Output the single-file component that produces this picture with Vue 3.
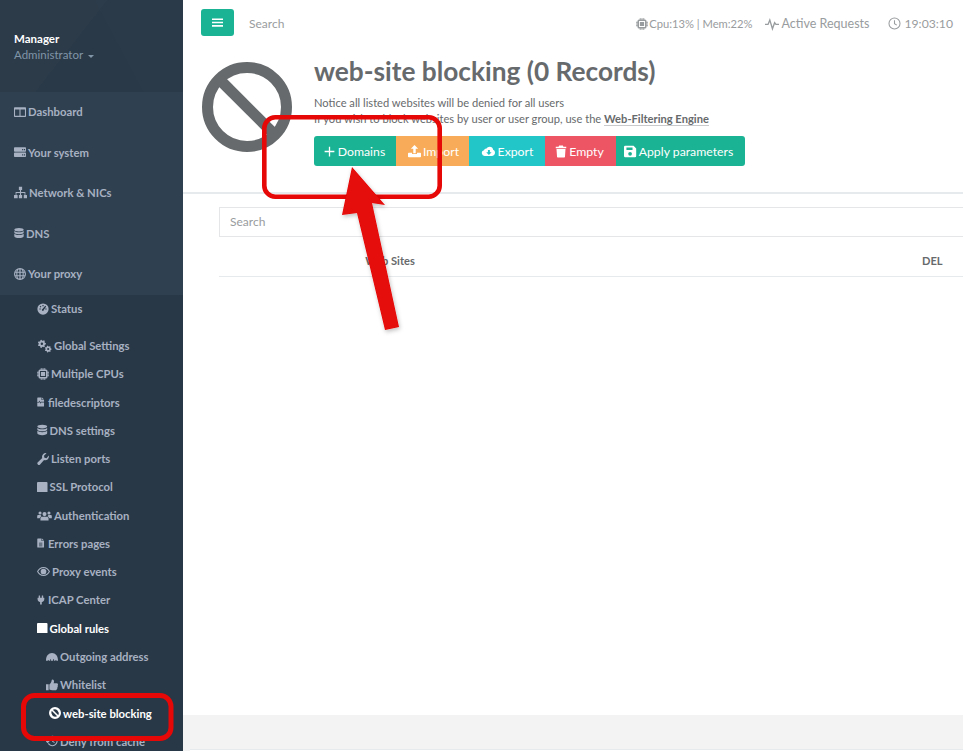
<script setup>
function gear(cx, cy, r, teeth, hole) {
  const out = r * 1.3
  const step = Math.PI / teeth
  let d = ''
  for (let i = 0; i < teeth * 2; i++) {
    const a1 = i * step - step * 0.28
    const a2 = i * step + step * 0.28
    const rad = i % 2 === 0 ? out : r
    d += (i === 0 ? 'M' : 'L') + (cx + rad * Math.cos(a1)).toFixed(2) + ' ' + (cy + rad * Math.sin(a1)).toFixed(2)
    d += 'L' + (cx + rad * Math.cos(a2)).toFixed(2) + ' ' + (cy + rad * Math.sin(a2)).toFixed(2)
  }
  d += 'Z'
  d += `M${cx - hole} ${cy}a${hole} ${hole} 0 1 0 ${hole * 2} 0a${hole} ${hole} 0 1 0 ${-hole * 2} 0Z`
  return d
}

const cpu = 'M5 0h1.2v2h1.2V0h1.2v2h1.2V0H11v2h1a2 2 0 0 1 2 2v1h2v1.2h-2v1.2h2v1.2h-2v1.2h2V11h-2v1a2 2 0 0 1-2 2h-1v2H9.8v-2H8.6v2H7.4v-2H6.2v2H5v-2H4a2 2 0 0 1-2-2v-1H0V9.8h2V8.6H0V7.4h2V6.2H0V5h2V4a2 2 0 0 1 2-2h1zM4 4v8h8V4zM5.2 5.2h5.600v5.600H5.200z'
const ban = 'M8 0a8 8 0 1 1 0 16A8 8 0 0 1 8 0zM3.600 5.100A5.500 5.500 0 0 0 10.900 12.400zM5.100 3.600l7.300 7.300A5.500 5.500 0 0 0 5.100 3.600z'

const icons = {
  columns: { f: 'M1 1.500h14a1 1 0 0 1 1 1v11a1 1 0 0 1-1 1H1a1 1 0 0 1-1-1v-11a1 1 0 0 1 1-1zM1.400 4.600v8.500h5.900V4.600zm7.300 0v8.500h5.900V4.600z' },
  server: { f: 'M1 1.500h14a1 1 0 0 1 1 1v4a1 1 0 0 1-1 1H1a1 1 0 0 1-1-1v-4a1 1 0 0 1 1-1zm9.800 2.500v1.500h1.500V4zm2.500 0v1.500h1.500V4zM1 8.800h14a1 1 0 0 1 1 1v3.700a1 1 0 0 1-1 1H1a1 1 0 0 1-1-1V9.800a1 1 0 0 1 1-1zm9.800 2.300v1.500h1.500v-1.500zm2.500 0v1.500h1.500v-1.500z' },
  sitemap: { f: 'M6 1h4v4H8.700v2.300H14V11h1.500a.5.5 0 0 1 .5.5V15h-4v-3.500a.5.5 0 0 1 .5-.5H13V8.500H8.700V11H10v4H6v-4h1.300V8.500H3V11h1a.5.5 0 0 1 .500.500V15H0v-3.500a.5.5 0 0 1 .500-.500H2V7.300h5.300V5H6z' },
  database: { f: 'M8 0c4.400 0 7.500 1.200 7.500 2.800S12.400 5.600 8 5.600.500 4.400.500 2.800 3.600 0 8 0zM.500 4.800C1.800 6.200 4.700 6.900 8 6.900s6.200-.700 7.500-2.100v2.400C15.500 8.800 12.400 10 8 10S.500 8.800.500 7.200zm0 4.400C1.800 10.600 4.700 11.300 8 11.300s6.200-.700 7.500-2.100v3.900C15.500 14.800 12.400 16 8 16S.500 14.800.500 13.100z' },
  globe: { f: 'M8 0a8 8 0 1 1 0 16A8 8 0 0 1 8 0zM5.800 2C5 3 4.700 4 4.600 5h2.600V2zM8.800 2v3h2.600c-.100-1-.400-2-1.200-3zM4.500 6.300v3.400h2.700V6.300zm4.300 0v3.400h2.700V6.300zM4.600 11c.100 1 .400 2 1.200 3h1.400v-3zm4.200 0v3h1.400c.800-1 1.100-2 1.200-3zM2 5h1.200c.100-.800.300-1.500.600-2.200C3 3.300 2.400 4.100 2 5zm10.800 0H14c-.400-.900-1-1.700-1.800-2.200.300.700.500 1.400.600 2.200zM1.700 6.300c-.100 1.100-.100 2.300 0 3.400h1.400V6.300zm11.200 0v3.400h1.400c.100-1.100.100-2.300 0-3.400zM2 11c.400.900 1 1.700 1.800 2.200-.300-.700-.500-1.400-.600-2.200zm10.800 0c-.100.800-.300 1.500-.600 2.200.800-.500 1.400-1.300 1.800-2.200z' },
  gauge: { f: 'M8 .500a7.500 7.500 0 1 1 0 15 7.500 7.500 0 0 1 0-15zM7.200 2.500v1.800h1.600V2.500zM3.200 7.200v1.600H5V7.200zm7.800 0v1.600h1.800V7.200zM11 3.600 7.300 8A1.300 1.300 0 1 0 9 9.300l3.200-4.700zM4.700 3.800 3.600 4.900l1.200 1.200 1.100-1.100z' },
  gears: { f: gear(5, 5.500, 3.600, 7, 1.400) + gear(12.200, 11.500, 3, 7, 1.200) },
  cpu: { f: cpu },
  filepulse: { f: 'M1.500 0H8v4.500h4.500V15a1 1 0 0 1-1 1h-10a1 1 0 0 1-1-1V1a1 1 0 0 1 1-1zM9 0l3.500 3.500H9zM.500 9.500h2.800l1-2 1.600 3.500 1.300-2.300h5.300v-1H6.500l-.600 1-1.600-3.500-1.700 3.300H.500z' },
  wrench: { f: 'M15.700 3.400c.500 1.700.100 3.500-1.200 4.800-1.400 1.400-3.400 1.700-5.100 1.100l-5.300 5.900a2.100 2.100 0 0 1-3-3L7 6.800C6.300 5 6.700 3 8.100 1.600 9.300.400 11-.100 12.600.300L9.300 3.600l.600 2.800 2.800.600z' },
  square: { f: 'M1.500 0h13A1.500 1.500 0 0 1 16 1.500v13a1.500 1.500 0 0 1-1.500 1.500h-13A1.500 1.500 0 0 1 0 14.500v-13A1.500 1.500 0 0 1 1.500 0z' },
  users: { f: 'M3.500 3a1.900 1.900 0 1 1 0 3.800 1.900 1.900 0 0 1 0-3.800zM14.500 3a1.900 1.900 0 1 1 0 3.800 1.900 1.900 0 0 1 0-3.800zM9 3.800a2.500 2.500 0 1 1 0 5 2.500 2.500 0 0 1 0-5zM0 8.800c0-.800.700-1.300 1.500-1.300h2.700c.300.600.700 1.100 1.200 1.500-1.200.400-2 1.300-2.400 2.500H0zM18 8.800c0-.800-.700-1.300-1.500-1.300h-2.700c-.300.600-.700 1.100-1.200 1.500 1.200.400 2 1.300 2.400 2.500H18zM6 9.500h6c1.200 0 2 1 2 2.200V14H4v-2.300c0-1.200.800-2.200 2-2.200z' },
  filetext: { f: 'M1.500 0H8v4.500h4.500V15a1 1 0 0 1-1 1h-10a1 1 0 0 1-1-1V1a1 1 0 0 1 1-1zM9 0l3.500 3.500H9zM3.500 7.500v1.200h6V7.500zm0 2.600v1.200h6v-1.200zm0 2.500v1.200h6v-1.200z' },
  eye: { f: 'M8 2.500c3.600 0 6.500 2.300 8 5.500-1.500 3.200-4.400 5.500-8 5.500S1.500 11.200 0 8c1.500-3.200 4.400-5.500 8-5.500zm0 1.300C5.400 3.800 3.100 5.500 1.500 8c1.600 2.500 3.900 4.200 6.500 4.200s4.900-1.700 6.500-4.200C12.900 5.500 10.600 3.800 8 3.800zm0 .700a3.500 3.500 0 1 1 0 7 3.500 3.500 0 0 1 0-7z' },
  plug: { f: 'M3.500 0h1.500a.5.5 0 0 1 .500.500V4h3V.500A.5.5 0 0 1 9 0h1.500a.5.5 0 0 1 .500.500V4h1.500a.5.5 0 0 1 .500.500V6c0 3-1.800 5-4.500 5.500V16h-3v-4.500C2.800 11 1 9 1 6V4.500A.5.5 0 0 1 1.500 4H3V.500a.5.5 0 0 1 .500-.500z' },
  dome: { f: 'M0 12C0 6.500 3.500 2.500 8 2.500s8 4 8 9.500v1h-2.300v-1h-1v1h-2v-2H9.500v2h-3v-2h-1v2h-2v-1h-1v1H0z' },
  thumb: { f: 'M0 7h3.500v8H0zM4.500 7.300c1.500-1.200 2.700-3 3-5.300 0-1 .500-1.500 1.200-1.500 1.500 0 2 1.500 2 2.800 0 1-.300 1.700-.700 2.500h4.300c1 0 1.700.800 1.700 1.700 0 .500-.200 1-.500 1.300.200.300.300.700.300 1 0 .600-.300 1.100-.700 1.400.100.300.100.500.100.800 0 .700-.400 1.200-.900 1.500 0 .900-.800 1.500-1.700 1.500H8.500c-1.500 0-2.700-.500-4-1z' },
  ban: { f: ban },
  history: { f: 'M8.500 1a7 7 0 1 1-6 10.600l1.200-.800A5.600 5.600 0 1 0 2.900 8H5l-2.800 3L-.500 8H1.500a7 7 0 0 1 7-7zM8 4.500h1.300v3.600l2.500 1.500-.700 1.100L8 8.800z' },
  plus: { f: 'M7.200 2h1.600v5.200H14v1.600H8.800V14H7.200V8.800H2V7.200h5.200z' },
  upload: { f: 'M8 0l4.500 4.700H9.500V10h-3V4.700H3.500zM1 9.500h4V11h6V9.500h4a1 1 0 0 1 1 1V14a1 1 0 0 1-1 1H1a1 1 0 0 1-1-1v-3.500a1 1 0 0 1 1-1z' },
  clouddown: { f: 'M9.500 2c2.200 0 4 1.600 4.200 3.800C15.100 6.200 16 7.500 16 9.500c0 2.200-1.800 4-4 4H3.500a3.500 3.500 0 0 1-1-6.900C2.800 5 4.300 4 5.700 4.300 6.500 2.900 7.900 2 9.500 2zM7.300 6v3H5.200l3.300 3.400L11.800 9H9.700V6z' },
  trash: { f: 'M5.500 0h5l.7 1.500H15V3.500H1V1.500h3.800zM2 4.500h12L13.300 15a1 1 0 0 1-1 1H3.700a1 1 0 0 1-1-1z' },
  save: { f: 'M1.500 1h10.300L15 4.200V13.500a1.500 1.500 0 0 1-1.500 1.500h-12A1.500 1.500 0 0 1 0 13.500v-11A1.500 1.500 0 0 1 1.500 1zM3 3v3h7.500V3zM7.500 8.500a2.300 2.300 0 1 0 0 4.600 2.300 2.300 0 0 0 0-4.600z' },
  bars: { f: 'M0 2h16v2.400H0zM0 6.800h16v2.400H0zM0 11.600h16V14H0z' },
  pulse: { s: 'M0 8.500h3.500l2-5 3 10 2.500-7 1.500 2h3.500' },
  clock: { s: 'M8 1.200a6.800 6.800 0 1 1 0 13.600A6.800 6.800 0 0 1 8 1.200zM8 4v4.200l2.800 1.800' }
}

const mainNav = [
  { label: 'Dashboard', icon: 'columns', w: 12, h: 12 },
  { label: 'Your system', icon: 'server', w: 12, h: 12 },
  { label: 'Network & NICs', icon: 'sitemap', w: 13, h: 13 },
  { label: 'DNS', icon: 'database', w: 10, h: 12 },
  { label: 'Your proxy', icon: 'globe', w: 12, h: 12 }
]

const subNav = [
  { label: 'Status', icon: 'gauge', w: 12, h: 12, first: true },
  { label: 'Global Settings', icon: 'gears', w: 15, h: 14 },
  { label: 'Multiple CPUs', icon: 'cpu', w: 12, h: 12 },
  { label: 'filedescriptors', icon: 'filepulse', w: 9, h: 12 },
  { label: 'DNS settings', icon: 'database', w: 10.500, h: 12 },
  { label: 'Listen ports', icon: 'wrench', w: 12, h: 12 },
  { label: 'SSL Protocol', icon: 'square', w: 10.500, h: 10.500 },
  { label: 'Authentication', icon: 'users', w: 15, h: 13, vb: 18 },
  { label: 'Errors pages', icon: 'filetext', w: 9, h: 12 },
  { label: 'Proxy events', icon: 'eye', w: 13, h: 13 },
  { label: 'ICAP Center', icon: 'plug', w: 9, h: 12 },
  { label: 'Global rules', icon: 'square', w: 10.500, h: 10.500, active: true },
  { label: 'Outgoing address', icon: 'dome', w: 12, h: 12, deep: true },
  { label: 'Whitelist', icon: 'thumb', w: 12, h: 12, deep: true },
  { label: 'web-site blocking', icon: 'ban', w: 12, h: 12, deep: true, active: true, current: true },
  { label: 'Deny from cache', icon: 'history', w: 12, h: 12, deep: true }
]

const actions = [
  { label: 'Domains', icon: 'plus', cls: 'green', w: 82, iw: 13, pad: '0 2px 0 0' },
  { label: 'Import', icon: 'upload', cls: 'orange', w: 73, iw: 13, pad: '0 0 0 2px' },
  { label: 'Export', icon: 'clouddown', cls: 'cyan', w: 76, iw: 15, pad: '0' },
  { label: 'Empty', icon: 'trash', cls: 'red', w: 71, iw: 12, pad: '0 2px 0 0' },
  { label: 'Apply parameters', icon: 'save', cls: 'green', w: 129, iw: 13, pad: '0 4px 0 0' }
]

function box(n) {
  return `0 0 ${n || 16} 16`
}
</script>

<template>
  <div class="app">
    <aside class="sidebar">
      <div class="profile">
        <div class="name">Manager</div>
        <div class="role">Administrator <span class="caret"></span></div>
      </div>
      <nav class="nav">
        <a v-for="it in mainNav" :key="it.label" class="item">
          <svg class="ic" :viewBox="box()" :style="{ width: it.w + 'px', height: it.h + 'px' }">
            <path :d="icons[it.icon].f" fill="currentColor" fill-rule="evenodd" />
          </svg>
          <span>{{ it.label }}</span>
        </a>
      </nav>
      <nav class="sub">
        <a
          v-for="it in subNav"
          :key="it.label"
          class="subitem"
          :class="{ first: it.first, deep: it.deep, on: it.active, current: it.current }"
        >
          <svg class="ic" :viewBox="box(it.vb)" :style="{ width: it.w + 'px', height: it.h + 'px' }">
            <path :d="icons[it.icon].f" fill="currentColor" fill-rule="evenodd" />
          </svg>
          <span>{{ it.label }}</span>
        </a>
      </nav>
    </aside>

    <main class="main">
      <header class="topbar">
        <button class="toggle">
          <svg viewBox="0 0 16 16" class="bars"><path :d="icons.bars.f" fill="#fff" /></svg>
        </button>
        <span class="topsearch">Search</span>
        <div class="stats">
          <span class="stat cpu">
            <svg viewBox="0 0 16 16" class="ic12"><path :d="icons.cpu.f" fill="currentColor" fill-rule="evenodd" /></svg>Cpu:13% | Mem:22%
          </span>
          <span class="stat req">
            <svg viewBox="0 0 16 16" class="ic14"><path :d="icons.pulse.s" fill="none" stroke="currentColor" stroke-width="1.500" /></svg>Active Requests
          </span>
          <span class="stat time">
            <svg viewBox="0 0 16 16" class="ic13"><path :d="icons.clock.s" fill="none" stroke="currentColor" stroke-width="1.300" /></svg>19:03:10
          </span>
        </div>
      </header>

      <section class="hero">
        <svg class="bigban" viewBox="0 0 90 90">
          <circle cx="45" cy="45" r="39.500" fill="none" stroke="#676a6c" stroke-width="11" />
          <path d="M17 17 73 73" stroke="#676a6c" stroke-width="11" />
        </svg>
        <div class="herotext">
          <h1>web-site blocking (0 Records)</h1>
          <p>Notice all listed websites will be denied for all users</p>
          <p>If you wish to block websites by user or user group, use the <a class="link">Web-Filtering Engine</a></p>
          <div class="btns">
            <button
              v-for="a in actions"
              :key="a.label"
              class="btn"
              :class="a.cls"
              :style="{ width: a.w + 'px', padding: a.pad }"
            >
              <svg viewBox="0 0 16 16" class="btnic" :style="{ width: a.iw + 'px' }"><path :d="icons[a.icon].f" fill="#fff" fill-rule="evenodd" /></svg>{{ a.label }}
            </button>
          </div>
        </div>
      </section>

      <section class="content">
        <div class="search">Search</div>
        <div class="thead">
          <span class="th1">Web Sites</span>
          <span class="th2">DEL</span>
        </div>
      </section>

      <footer class="footer"><div class="footline"></div></footer>
    </main>

    <svg class="annot" viewBox="0 0 963 751">
      <defs>
        <filter id="sh" x="-30%" y="-30%" width="160%" height="160%">
          <feDropShadow dx="1" dy="2" stdDeviation="2" flood-color="#000" flood-opacity="0.25" />
        </filter>
      </defs>
      <rect x="264.300" y="117.300" width="175.400" height="79.400" rx="11" fill="none" stroke="#e60707" stroke-width="4.600" />
      <rect x="23.500" y="695.500" width="147.500" height="43" rx="11" fill="none" stroke="#e60707" stroke-width="5" />
      <polygon
        points="352,167 385,205 372,203 399,327 385,330 357,213 342,215"
        fill="#e60707"
        filter="url(#sh)"
      />
    </svg>
  </div>
</template>

<style>
html, body { margin: 0; overflow: hidden; }
</style>

<style scoped>
.app {
  position: relative;
  display: flex;
  width: 963px;
  height: 751px;
  overflow: hidden;
  font-family: Lato, "Open Sans", sans-serif;
  color: #676a6c;
  background: #fff;
}
.sidebar {
  width: 183px;
  flex: none;
  height: 751px;
  overflow: hidden;
  background: #2f4050;
  color: #a7b1c2;
}
.profile {
  height: 91.500px;
  box-sizing: border-box;
  padding: 31px 14px 0;
  background:
    linear-gradient(128deg, rgba(255,255,255,0.010) 0 42%, transparent 42%),
    linear-gradient(62deg, #2a3947 0 62%, #2b3a49 62%);
}
.name { color: #fff; font-size: 11.500px; font-weight: 700; line-height: 16px; }
.role { font-size: 11.500px; line-height: 16px; color: #8095a8; }
.caret {
  display: inline-block;
  border-top: 3px solid #8095a8;
  border-left: 3px solid transparent;
  border-right: 3px solid transparent;
  vertical-align: middle;
  margin-left: 2px;
}
.nav { display: flex; flex-direction: column; }
.item {
  height: 40.500px;
  display: flex;
  align-items: center;
  gap: 2px;
  padding-left: 14px;
  font-size: 11.300px;
  font-weight: 700;
}
.sub {
  display: flex;
  flex-direction: column;
  background: #293846;
  height: 457px;
  margin-top: 0.500px;
}
.subitem {
  height: 28.270px;
  flex: none;
  display: flex;
  align-items: center;
  gap: 2px;
  padding-left: 37px;
  font-size: 11.300px;
  font-weight: 700;
}
.subitem.first { margin-bottom: 8.700px; }
.subitem.deep { padding-left: 46px; }
.subitem.on { color: #fff; }
.subitem.current { padding-left: 49px; }
.ic { flex: none; }

.main {
  flex: 1;
  min-width: 0;
  display: flex;
  flex-direction: column;
  overflow: hidden;
}
.topbar {
  height: 45px;
  flex: none;
  display: flex;
  align-items: center;
  padding: 0 10px 0 18px;
  box-sizing: border-box;
}
.toggle {
  width: 33px;
  height: 27px;
  border: 0;
  border-radius: 3px;
  background: #1ab394;
  padding: 0;
  display: flex;
  align-items: center;
  justify-content: center;
}
.bars { width: 11px; height: 11px; }
.topsearch { margin: 2px 0 0 15px; font-size: 12px; color: #999c9e; }
.stats {
  margin: 2px 0 0 auto;
  display: flex;
  align-items: center;
  font-size: 12px;
  color: #999c9e;
}
.stat { display: flex; align-items: center; gap: 1px; }
.cpu { font-size: 11.200px; }
.req { margin-left: 12px; gap: 3px; font-size: 12.500px; }
.time { margin-left: 19px; gap: 3px; font-size: 12.200px; }
.ic12 { width: 12px; height: 12px; }
.ic14 { width: 14px; height: 14px; }
.ic13 { width: 13px; height: 13px; }

.hero {
  height: 149px;
  flex: none;
  box-sizing: border-box;
  border-bottom: 2px solid #e7eaec;
  display: flex;
  padding-left: 19px;
  gap: 22px;
}
.bigban { width: 90px; height: 90px; margin-top: 17px; flex: none; }
.herotext { padding-top: 10px; }
h1 {
  margin: 0 0 8px;
  font-size: 26.250px;
  line-height: 32px;
  font-weight: 700;
  color: #676a6c;
}
p { margin: 0; font-size: 11.150px; line-height: 16px; }
.link {
  font-weight: 700;
  border-bottom: 1px solid #c8cacc;
  color: #676a6c;
}
.btns { display: flex; margin-top: 9px; border-radius: 3px; overflow: hidden; width: 431px; }
.btn {
  height: 30px;
  flex: none;
  box-sizing: border-box;
  border: 0;
  display: flex;
  align-items: center;
  justify-content: center;
  gap: 2px;
  font: 12.250px Lato, sans-serif;
  color: #fff;
  white-space: nowrap;
}
.btnic { height: 13px; flex: none; }
.green { background: #1ab394; }
.orange { background: #f8ac59; }
.cyan { background: #23c6c8; }
.red { background: #ed5565; }

.content { flex: 1; padding: 13px 0 0 36px; min-height: 0; }
.search {
  width: 800px;
  height: 30px;
  box-sizing: border-box;
  border: 1px solid #e5e6e7;
  padding-left: 10px;
  font-size: 12px;
  line-height: 28px;
  color: #999c9e;
}
.thead {
  width: 800px;
  height: 40px;
  box-sizing: border-box;
  border-bottom: 1px solid #e7eaec;
  padding-top: 8px;
  display: grid;
  grid-template-columns: 342px 361px auto;
  align-items: center;
  font-size: 11.100px;
  font-weight: 700;
}
.th1 { text-align: center; }
.th2 { grid-column: 3; }

.footer {
  height: 36px;
  flex: none;
  background: #f3f3f4;
  box-sizing: border-box;
  padding: 34px 0 0 7px;
}
.footline { border-top: 1px solid #e7eaec; height: 1px; background: #fff; }

.annot {
  position: absolute;
  left: 0;
  top: 0;
  width: 963px;
  height: 751px;
  pointer-events: none;
}
</style>
